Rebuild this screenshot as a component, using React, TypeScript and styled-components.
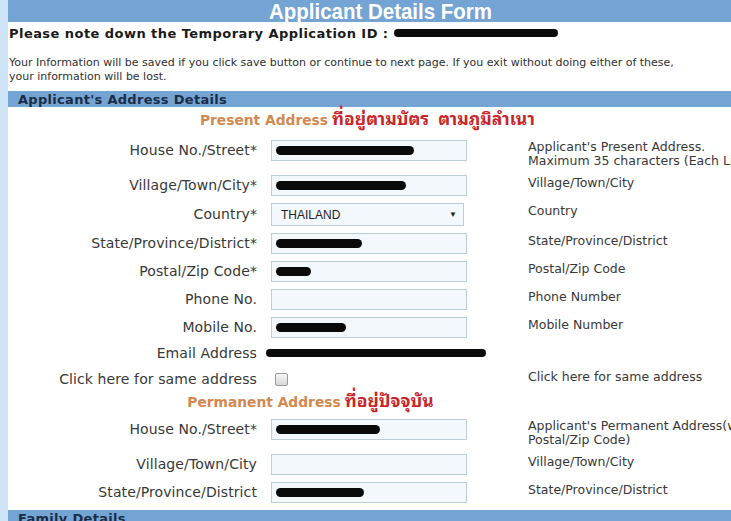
import React from "react";
import styled, { createGlobalStyle } from "styled-components";

const COLORS = {
  bar: "#74a4d4",
  strip: "#cfe4f7",
  label: "#383838",
  navy: "#1b2c47",
  field: "#f3f8fc",
  fieldBorder: "#bccfd9",
  present: "#d3884f",
  thai: "#c8262a",
};

const GlobalStyle = createGlobalStyle`
  html, body {
    margin: 0;
    padding: 0;
    background: #ffffff;
    overflow: hidden;
  }
  body {
    font-family: "DejaVu Sans", Verdana, sans-serif;
  }
`;

const Page = styled.div`
  display: flex;
  align-items: flex-start;
  width: 760px;
  height: 521px;
  overflow: hidden;
`;

const Strip = styled.div`
  width: 8px;
  height: 100%;
  flex-shrink: 0;
  background: ${COLORS.strip};
`;

const Main = styled.div`
  width: 746px;
  flex-shrink: 0;
`;

const TitleBar = styled.div`
  height: 22px;
  box-sizing: border-box;
  padding-top: 2px;
  background: ${COLORS.bar};
  display: flex;
  align-items: center;
  justify-content: center;
  overflow: hidden;
`;

const TitleText = styled.span`
  display: inline-block;
  color: #ffffff;
  font-family: "Liberation Sans", Arial, sans-serif;
  font-weight: bold;
  font-size: 22.5px;
  line-height: 20px;
  transform: scaleX(0.91);
  white-space: nowrap;
`;

const NoteLine = styled.div`
  display: flex;
  align-items: center;
  height: 22px;
  padding-left: 1px;
  font-weight: bold;
  font-size: 13px;
  letter-spacing: 0.45px;
  color: #1a1a1a;
`;

const Redact = styled.span<{ $w: number; $h?: number }>`
  display: inline-block;
  width: ${(p) => p.$w}px;
  height: ${(p) => p.$h ?? 9}px;
  background: #0a0a0a;
  border-radius: 5px;
  flex-shrink: 0;
`;

const Info = styled.div`
  padding: 12px 0 7px 1px;
  font-size: 11px;
  line-height: 14px;
  color: #2f2f2f;
  white-space: nowrap;
`;

const SectionBar = styled.div<{ $gap?: number }>`
  height: 16px;
  margin-top: ${(p) => p.$gap ?? 0}px;
  background: ${COLORS.bar};
  padding-left: 10px;
  display: flex;
  align-items: center;
  font-weight: bold;
  font-size: 13px;
  letter-spacing: 0.3px;
  color: ${COLORS.navy};
  overflow: hidden;
`;

const Heading = styled.div<{ $top: number; $bottom: number }>`
  width: 512px;
  display: grid;
  grid-template-columns: minmax(0, 1fr) auto minmax(0, 1fr);
  align-items: baseline;
  padding: ${(p) => p.$top}px 0 ${(p) => p.$bottom}px;
  height: 22px;
`;

const HeadingText = styled.span`
  grid-column: 2;
  color: ${COLORS.present};
  font-weight: bold;
  font-size: 13.8px;
  white-space: nowrap;
`;

const ThaiNote = styled.span`
  grid-column: 3;
  justify-self: start;
  margin-left: 4px;
  color: ${COLORS.thai};
  font-family: "Noto Sans Thai Looped", "Noto Sans Thai", "Noto Sans", "DejaVu Sans", sans-serif;
  font-weight: bold;
  font-size: 17.5px;
  line-height: 14px;
  white-space: nowrap;
`;

const Row = styled.div<{ $h: number; $pad?: number }>`
  height: ${(p) => p.$h}px;
  display: flex;
  align-items: flex-start;
  padding-top: ${(p) => p.$pad ?? 3}px;
  box-sizing: border-box;
`;

const Label = styled.div<{ $lh?: number }>`
  width: 249px;
  flex-shrink: 0;
  text-align: right;
  font-size: 14px;
  letter-spacing: 0.1px;
  line-height: ${(p) => p.$lh ?? 21}px;
  color: ${COLORS.label};
  white-space: nowrap;
`;

const FieldCell = styled.div<{ $h?: number; $shift?: number }>`
  width: 196px;
  margin-left: ${(p) => 14 + (p.$shift ?? 0)}px;
  flex-shrink: 0;
  height: ${(p) => p.$h ?? 21}px;
  display: flex;
  align-items: center;
`;

const Input = styled.div`
  width: 100%;
  height: 21px;
  box-sizing: border-box;
  background: ${COLORS.field};
  border: 1px solid ${COLORS.fieldBorder};
  display: flex;
  align-items: center;
  padding-left: 4px;
`;

const Select = styled(Input)`
  width: 193px;
  height: 23px;
  justify-content: space-between;
  padding: 0 6px 0 9px;
  font-family: "Liberation Sans", Arial, sans-serif;
  font-size: 12px;
  color: #222;
`;

const Arrow = styled.span`
  font-size: 8px;
  color: #222;
`;

const Check = styled.span`
  width: 11px;
  height: 11px;
  margin-left: 4px;
  border: 1px solid #9a9a9a;
  border-radius: 2px;
  background: linear-gradient(#f6f6f6, #d8d8d8);
`;

const Help = styled.div<{ $two?: boolean; $lh?: number }>`
  margin-left: 61px;
  flex-shrink: 0;
  font-size: 12.5px;
  line-height: ${(p) => p.$lh ?? (p.$two ? 14 : 16)}px;
  color: ${COLORS.label};
  white-space: nowrap;
`;

type Field = {
  label: string;
  help: React.ReactNode;
  redact?: number;
  h?: number;
};

const presentTop: Field[] = [
  {
    label: "House No./Street*",
    help: (
      <>
        Applicant's Present Address.
        <br />
        Maximum 35 characters (Each Line)
      </>
    ),
    redact: 138,
    h: 35,
  },
  { label: "Village/Town/City*", help: "Village/Town/City", redact: 130 },
];

const presentRest: Field[] = [
  { label: "State/Province/District*", help: "State/Province/District", redact: 86 },
  { label: "Postal/Zip Code*", help: "Postal/Zip Code", redact: 35 },
  { label: "Phone No.", help: "Phone Number" },
  { label: "Mobile No.", help: "Mobile Number", redact: 70 },
];

const permanent: Field[] = [
  {
    label: "House No./Street*",
    help: (
      <>
        Applicant's Permanent Address(with
        <br />
        Postal/Zip Code)
      </>
    ),
    redact: 104,
    h: 35,
  },
  { label: "Village/Town/City", help: "Village/Town/City" },
  { label: "State/Province/District", help: "State/Province/District", redact: 88 },
];

function FieldRow({ f }: { f: Field }) {
  const h = f.h ?? 28;
  return (
    <Row $h={h}>
      <Label>{f.label}</Label>
      <FieldCell>
        <Input>{f.redact ? <Redact $w={f.redact} /> : null}</Input>
      </FieldCell>
      <Help $two={h > 28}>{f.help}</Help>
    </Row>
  );
}

export default function App() {
  return (
    <>
      <GlobalStyle />
      <Page>
        <Strip />
        <Main>
          <TitleBar>
            <TitleText>Applicant Details Form</TitleText>
          </TitleBar>
          <NoteLine>
            Please note down the Temporary Application ID :&nbsp;
            <Redact $w={164} $h={8} />
          </NoteLine>
          <Info>
            Your Information will be saved if you click save button or continue to next page. If you exit without doing either of these,
            <br />
            your information will be lost.
          </Info>
          <SectionBar>Applicant's Address Details</SectionBar>

          <Heading $top={3} $bottom={5}>
            <HeadingText>Present Address</HeadingText>
            <ThaiNote>ที่อยู่ตามบัตร&nbsp;&nbsp;ตามภูมิลำเนา</ThaiNote>
          </Heading>

          {presentTop.map((f) => (
            <FieldRow key={"p" + f.label} f={f} />
          ))}

          <Row $h={30}>
            <Label $lh={23}>Country*</Label>
            <FieldCell $h={23}>
              <Select>
                THAILAND
                <Arrow>▼</Arrow>
              </Select>
            </FieldCell>
            <Help>Country</Help>
          </Row>

          {presentRest.map((f) => (
            <FieldRow key={"r" + f.label} f={f} />
          ))}

          <Row $h={24} $pad={0}>
            <Label $lh={22}>Email Address</Label>
            <FieldCell $h={22} $shift={-5}>
              <Redact $w={220} $h={8} />
            </FieldCell>
          </Row>

          <Row $h={26} $pad={0}>
            <Label $lh={26}>Click here for same address</Label>
            <FieldCell $h={26}>
              <Check />
            </FieldCell>
            <Help $lh={22}>Click here for same address</Help>
          </Row>

          <Heading $top={0} $bottom={2}>
            <HeadingText>Permanent Address</HeadingText>
            <ThaiNote>ที่อยู่ปัจจุบัน</ThaiNote>
          </Heading>

          {permanent.map((f) => (
            <FieldRow key={"m" + f.label} f={f} />
          ))}

          <SectionBar $gap={3}>Family Details</SectionBar>
        </Main>
      </Page>
    </>
  );
}
